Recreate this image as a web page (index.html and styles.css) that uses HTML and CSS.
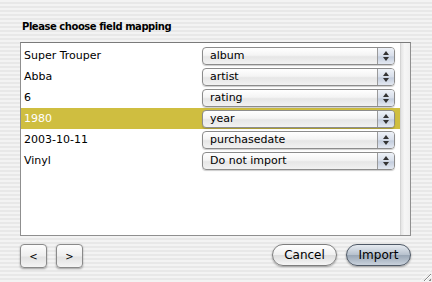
FILE: index.html
```html
<!DOCTYPE html>
<html lang="en">
<head>
    <meta charset="UTF-8">
    <title>Field mapping</title>
    <link rel="stylesheet" href="styles.css">
</head>
<body>

<div class="dialog">
    <h1 class="title">Please choose field mapping</h1>

    <div class="list">
        <div class="rows">
            <div class="row">
                <span class="label">Super Trouper</span>
                <div class="popup"><span class="popup-text">album</span><span class="arrows"><i class="up"></i><i class="down"></i></span></div>
            </div>
            <div class="row">
                <span class="label">Abba</span>
                <div class="popup"><span class="popup-text">artist</span><span class="arrows"><i class="up"></i><i class="down"></i></span></div>
            </div>
            <div class="row">
                <span class="label">6</span>
                <div class="popup"><span class="popup-text">rating</span><span class="arrows"><i class="up"></i><i class="down"></i></span></div>
            </div>
            <div class="row selected">
                <span class="label">1980</span>
                <div class="popup"><span class="popup-text">year</span><span class="arrows"><i class="up"></i><i class="down"></i></span></div>
            </div>
            <div class="row">
                <span class="label">2003-10-11</span>
                <div class="popup"><span class="popup-text">purchasedate</span><span class="arrows"><i class="up"></i><i class="down"></i></span></div>
            </div>
            <div class="row">
                <span class="label">Vinyl</span>
                <div class="popup"><span class="popup-text">Do not import</span><span class="arrows"><i class="up"></i><i class="down"></i></span></div>
            </div>
        </div>
        <div class="track"></div>
    </div>

    <div class="buttons">
        <div class="nav-buttons">
            <button class="square">&lt;</button>
            <button class="square">&gt;</button>
        </div>
        <div class="action-buttons">
            <button class="pill">Cancel</button>
            <button class="pill default">Import</button>
        </div>
    </div>
</div>

<div class="grip"></div>

</body>
</html>
```

FILE: styles.css
```css
html, body {
    margin: 0;
    padding: 0;
}
body {
    width: 432px;
    height: 282px;
    overflow: hidden;
    position: relative;
    font-family: "DejaVu Sans", Verdana, sans-serif;
    font-size: 11px;
    color: #000;
    background: repeating-linear-gradient(to bottom, #f3f3f3 0, #f3f3f3 2px, #e8e8e8 2px, #e8e8e8 4px);
}
.dialog {
    padding: 20px 21px 0 20px;
}
.title {
    margin: 0 0 0 2px;
    height: 22px;
    font-family: "DejaVu Sans", sans-serif;
    font-size: 10px;
    font-weight: bold;
    letter-spacing: -0.45px;
    line-height: 13px;
}
.list {
    display: flex;
    height: 192px;
    border: 1px solid #8f8f8f;
    border-top-color: #7a7a7a;
    background-color: white;
}
.rows {
    flex: 1;
    padding-top: 2px;
}
.row {
    display: flex;
    align-items: center;
    height: 21px;
}
.row.selected {
    background-color: #cfbe40;
    color: white;
}
.label {
    width: 178px;
    padding-left: 3px;
    font-size: 11px;
}
.popup {
    display: flex;
    width: 191px;
    height: 16px;
    margin-left: auto;
    margin-right: 5px;
    border: 1px solid #8c8c8c;
    border-radius: 4px;
    background: linear-gradient(to bottom, #ffffff 0%, #f4f4f4 45%, #e6e6e6 55%, #f2f2f2 100%);
    box-shadow: 0 1px 1px rgba(0, 0, 0, 0.2);
    color: #000;
    overflow: hidden;
}
.popup-text {
    flex: 1;
    padding-left: 7px;
    line-height: 16px;
    font-size: 11px;
}
.arrows {
    width: 16px;
    border-left: 1px solid #9a9a9a;
    background: linear-gradient(to bottom, #eef2f8 0%, #d7deea 50%, #c3cddd 55%, #e4e9f2 100%);
    display: flex;
    flex-direction: column;
    align-items: center;
    justify-content: center;
    gap: 2px;
}
.arrows i {
    width: 0;
    height: 0;
    border-left: 3px solid transparent;
    border-right: 3px solid transparent;
}
.arrows .up {
    border-bottom: 4px solid #333;
}
.arrows .down {
    border-top: 4px solid #333;
}
.track {
    width: 10px;
    border-left: 1px solid #d4d4d4;
    background: linear-gradient(to right, #e4e4e4, #f6f6f6 40%, #f0f0f0);
}
.buttons {
    display: flex;
    justify-content: space-between;
    margin-top: 8px;
}
.nav-buttons, .action-buttons {
    display: flex;
    gap: 9px;
}
button {
    font-family: "DejaVu Sans", sans-serif;
    font-size: 11px;
    color: #000;
    padding: 0;
    cursor: pointer;
}
.square {
    width: 27px;
    height: 24px;
    border: 1px solid #8a8a8a;
    border-radius: 4px;
    background: linear-gradient(to bottom, #fdfdfd 0%, #eeeeee 50%, #e2e2e2 55%, #f4f4f4 100%);
    box-shadow: 0 1px 2px rgba(0, 0, 0, 0.35);
    font-size: 10px;
}
.pill {
    width: 65px;
    height: 22px;
    border: 1px solid #7e7e7e;
    border-radius: 11px;
    background: linear-gradient(to bottom, #ffffff 0%, #f0f0f0 48%, #dedede 52%, #f6f6f6 100%);
    box-shadow: 0 1px 2px rgba(0, 0, 0, 0.35);
    font-size: 12px;
}
.pill.default {
    border-color: #4f5966;
    background: linear-gradient(to bottom, #e6ebf1 0%, #b8c2ce 48%, #9aa7b6 52%, #c9d2dc 100%);
}
.grip {
    position: absolute;
    right: 1px;
    bottom: 1px;
    width: 11px;
    height: 11px;
    background: repeating-linear-gradient(135deg, transparent 0, transparent 2px, #8a8a8a 2px, #8a8a8a 3px, #fff 3px, #fff 4px);
    clip-path: polygon(100% 0, 100% 100%, 0 100%);
}
```
